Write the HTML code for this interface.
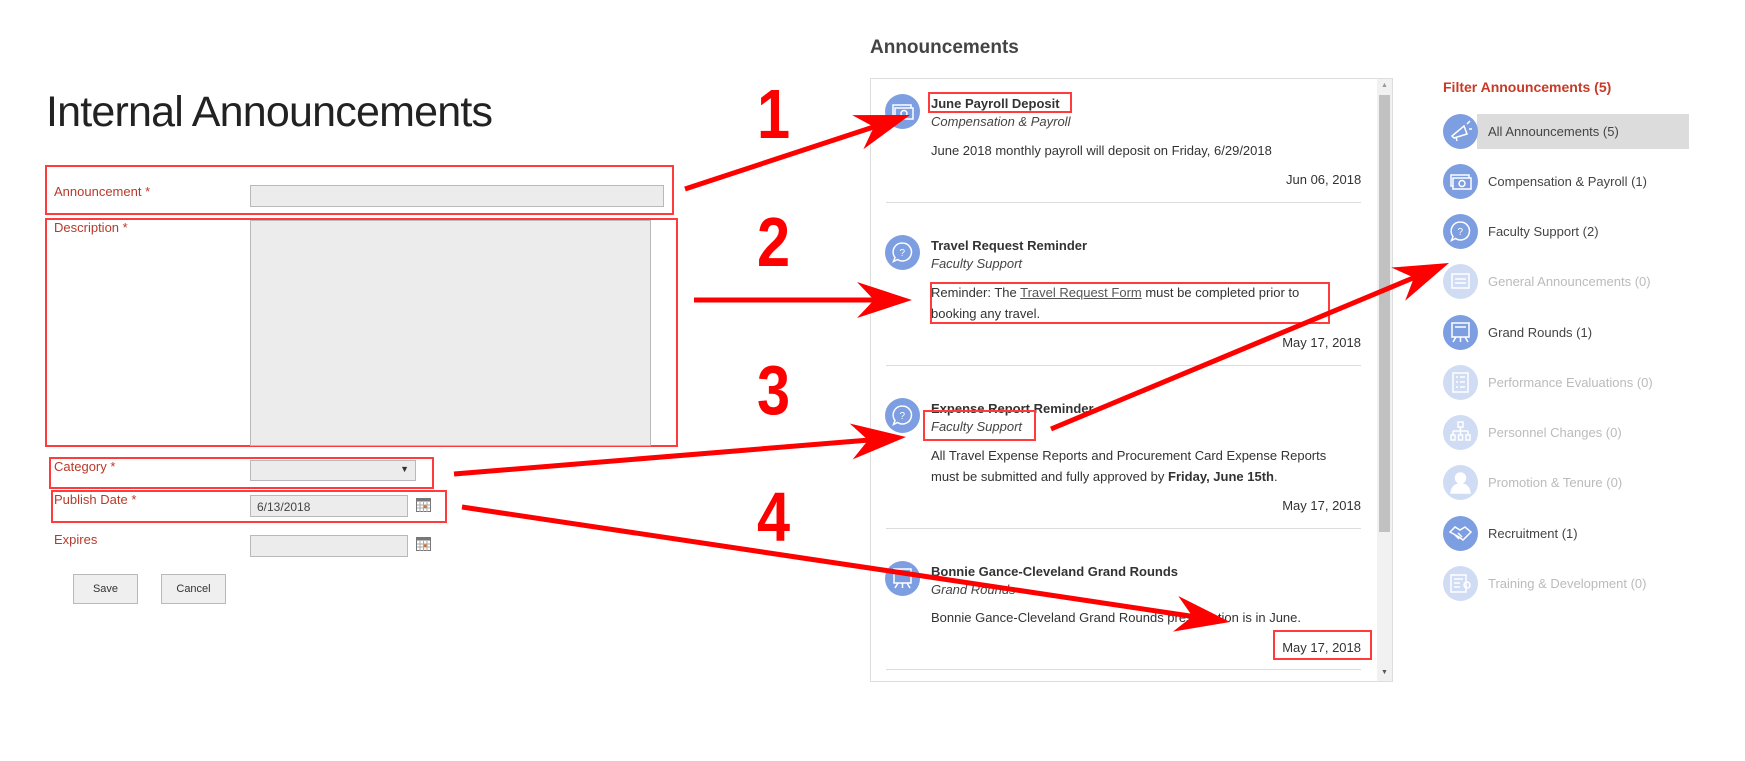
<!DOCTYPE html>
<html><head><meta charset="utf-8">
<style>
*{margin:0;padding:0;box-sizing:border-box}
body{width:1745px;height:761px;background:#fff;position:relative;overflow:hidden;font-family:"Liberation Sans",sans-serif;}
.a{position:absolute}
.lbl{position:absolute;color:#b83a2a;font-size:13px;}
.inp{position:absolute;background:#ececec;border:1px solid #b9b9b9;}
.rb{position:absolute;border:2px solid #ff3b3b;}
.btn{position:absolute;background:#efefef;border:1px solid #b9b9b9;font-size:11px;color:#333;text-align:center;line-height:29px;}
.num{position:absolute;font-weight:bold;color:#f00;font-size:70px;line-height:1;transform:scaleX(0.85);transform-origin:left top}
.ic{position:absolute;width:35px;height:35px;border-radius:50%;background:#7d9ee0;}
.ic.d{background:#cfdcf3}
.t{position:absolute;font-size:13px;color:#333;white-space:nowrap}
.tb{font-weight:bold;color:#333}
.ti{font-style:italic;color:#444}
.sep{position:absolute;left:886px;width:475px;height:1px;background:#ddd}
.f{position:absolute;left:1488px;font-size:13px;color:#444;white-space:nowrap}
.f.d{color:#bbb}
</style></head><body>

<div class="a" style="left:46px;top:88px;font-size:43px;color:#222;font-weight:300;letter-spacing:-0.8px;white-space:nowrap">Internal Announcements</div>

<div class="rb" style="left:45px;top:165px;width:629px;height:50px"></div>
<div class="lbl" style="left:54px;top:184px">Announcement *</div>
<div class="inp" style="left:250px;top:185px;width:414px;height:22px"></div>

<div class="rb" style="left:45px;top:218px;width:633px;height:229px"></div>
<div class="lbl" style="left:54px;top:220px">Description *</div>
<div class="inp" style="left:250px;top:220px;width:401px;height:226px"></div>

<div class="rb" style="left:49px;top:457px;width:385px;height:32px"></div>
<div class="lbl" style="left:54px;top:459px">Category *</div>
<div class="inp" style="left:250px;top:460px;width:166px;height:21px"><span style="position:absolute;right:6px;top:3px;font-size:9px;color:#333">▼</span></div>

<div class="rb" style="left:51px;top:490px;width:396px;height:33px"></div>
<div class="lbl" style="left:54px;top:492px">Publish Date *</div>
<div class="inp" style="left:250px;top:495px;width:158px;height:22px;font-size:12px;color:#444;padding:4px 6px">6/13/2018</div>
<svg class="a" style="left:416px;top:498px" width="15" height="14" viewBox="0 0 15 14"><rect x="0.5" y="0.5" width="14" height="13" fill="#fff" stroke="#777"/><rect x="0.5" y="0.5" width="14" height="3" fill="#777"/><path d="M4 4v10M7.5 4v10M11 4v10M1 7h13M1 10h13" stroke="#aaa"/><rect x="8" y="7.5" width="2.5" height="2.5" fill="#e07020"/></svg>

<div class="lbl" style="left:54px;top:532px">Expires</div>
<div class="inp" style="left:250px;top:535px;width:158px;height:22px"></div>
<svg class="a" style="left:416px;top:537px" width="15" height="14" viewBox="0 0 15 14"><rect x="0.5" y="0.5" width="14" height="13" fill="#fff" stroke="#777"/><rect x="0.5" y="0.5" width="14" height="3" fill="#777"/><path d="M4 4v10M7.5 4v10M11 4v10M1 7h13M1 10h13" stroke="#aaa"/><rect x="8" y="7.5" width="2.5" height="2.5" fill="#e07020"/></svg>

<div class="btn" style="left:73px;top:574px;width:65px;height:30px">Save</div>
<div class="btn" style="left:161px;top:574px;width:65px;height:30px">Cancel</div>

<div class="num" style="left:757px;top:79px">1</div>
<div class="num" style="left:757px;top:207px">2</div>
<div class="num" style="left:757px;top:355px">3</div>
<div class="num" style="left:757px;top:482px">4</div>

<div class="a" style="left:870px;top:37px;font-size:19px;font-weight:bold;color:#444">Announcements</div>
<div class="a" style="left:870px;top:78px;width:523px;height:604px;border:1px solid #ddd"></div>
<div class="a" style="left:1377px;top:79px;width:15px;height:602px;background:#f1f1f1"></div>
<div class="a" style="left:1379px;top:95px;width:11px;height:437px;background:#c1c1c1"></div>
<div class="a" style="left:1381px;top:82px;font-size:7px;color:#999">▲</div>
<div class="a" style="left:1381px;top:669px;font-size:7px;color:#555">▼</div>

<div class="ic" style="left:885px;top:94px"></div>
<div class="t tb" style="left:931px;top:96px">June Payroll Deposit</div>
<div class="t ti" style="left:931px;top:114px">Compensation &amp; Payroll</div>
<div class="t" style="left:931px;top:143px">June 2018 monthly payroll will deposit on Friday, 6/29/2018</div>
<div class="t" style="left:1286px;top:172px;width:75px;text-align:right">Jun 06, 2018</div>
<div class="sep" style="top:202px"></div>

<div class="ic" style="left:885px;top:235px"></div>
<div class="t tb" style="left:931px;top:238px">Travel Request Reminder</div>
<div class="t ti" style="left:931px;top:256px">Faculty Support</div>
<div class="t" style="left:931px;top:285px">Reminder: The <u style="color:#555">Travel Request Form</u> must be completed prior to</div>
<div class="t" style="left:931px;top:306px">booking any travel.</div>
<div class="t" style="left:1276px;top:335px;width:85px;text-align:right">May 17, 2018</div>
<div class="sep" style="top:365px"></div>

<div class="ic" style="left:885px;top:398px"></div>
<div class="t tb" style="left:931px;top:401px">Expense Report Reminder</div>
<div class="t ti" style="left:931px;top:419px">Faculty Support</div>
<div class="t" style="left:931px;top:448px">All Travel Expense Reports and Procurement Card Expense Reports</div>
<div class="t" style="left:931px;top:469px">must be submitted and fully approved by <b>Friday, June 15th</b>.</div>
<div class="t" style="left:1276px;top:498px;width:85px;text-align:right">May 17, 2018</div>
<div class="sep" style="top:528px"></div>

<div class="ic" style="left:885px;top:561px"></div>
<div class="t tb" style="left:931px;top:564px">Bonnie Gance-Cleveland Grand Rounds</div>
<div class="t ti" style="left:931px;top:582px">Grand Rounds</div>
<div class="t" style="left:931px;top:610px">Bonnie Gance-Cleveland Grand Rounds presentation is in June.</div>
<div class="t" style="left:1276px;top:640px;width:85px;text-align:right">May 17, 2018</div>
<div class="sep" style="top:669px"></div>

<div class="rb" style="left:928px;top:92px;width:144px;height:21px"></div>
<div class="rb" style="left:930px;top:282px;width:400px;height:42px"></div>
<div class="rb" style="left:923px;top:410px;width:113px;height:31px"></div>
<div class="rb" style="left:1273px;top:630px;width:99px;height:30px"></div>

<div class="a" style="left:1443px;top:79px;font-size:14px;font-weight:bold;color:#c83a26">Filter Announcements (5)</div>
<div class="a" style="left:1477px;top:114px;width:212px;height:35px;background:#dcdcdc"></div>
<div class="ic" style="left:1443px;top:114px"></div><div class="f" style="top:124px">All Announcements (5)</div>
<div class="ic" style="left:1443px;top:164px"></div><div class="f" style="top:174px">Compensation &amp; Payroll (1)</div>
<div class="ic" style="left:1443px;top:214px"></div><div class="f" style="top:224px">Faculty Support (2)</div>
<div class="ic d" style="left:1443px;top:264px"></div><div class="f d" style="top:274px">General Announcements (0)</div>
<div class="ic" style="left:1443px;top:315px"></div><div class="f" style="top:325px">Grand Rounds (1)</div>
<div class="ic d" style="left:1443px;top:365px"></div><div class="f d" style="top:375px">Performance Evaluations (0)</div>
<div class="ic d" style="left:1443px;top:415px"></div><div class="f d" style="top:425px">Personnel Changes (0)</div>
<div class="ic d" style="left:1443px;top:465px"></div><div class="f d" style="top:475px">Promotion &amp; Tenure (0)</div>
<div class="ic" style="left:1443px;top:516px"></div><div class="f" style="top:526px">Recruitment (1)</div>
<div class="ic d" style="left:1443px;top:566px"></div><div class="f d" style="top:576px">Training &amp; Development (0)</div>

<svg class="a" style="left:0;top:0" width="1745" height="761" fill="none" stroke="#fff" stroke-width="1.5">
<g transform="translate(885,94)"><rect x="8" y="11" width="18" height="11"/><rect x="10" y="14" width="18" height="11" fill="#7d9ee0"/><circle cx="19" cy="19.5" r="3"/></g>
<g transform="translate(1443,164)"><rect x="8" y="11" width="18" height="11"/><rect x="10" y="14" width="18" height="11" fill="#7d9ee0"/><circle cx="19" cy="19.5" r="3"/></g>
<g transform="translate(885,235)"><path d="M17.5 8a9 9 0 1 1-5 16.5l-4 2 1.5-4A9 9 0 0 1 17.5 8z"/><text x="14.5" y="21" font-size="10" fill="#fff" stroke="none" font-family="Liberation Sans">?</text></g>
<g transform="translate(885,398)"><path d="M17.5 8a9 9 0 1 1-5 16.5l-4 2 1.5-4A9 9 0 0 1 17.5 8z"/><text x="14.5" y="21" font-size="10" fill="#fff" stroke="none" font-family="Liberation Sans">?</text></g>
<g transform="translate(1443,214)"><path d="M17.5 8a9 9 0 1 1-5 16.5l-4 2 1.5-4A9 9 0 0 1 17.5 8z"/><text x="14.5" y="21" font-size="10" fill="#fff" stroke="none" font-family="Liberation Sans">?</text></g>
<g transform="translate(885,561)"><rect x="9" y="8" width="17" height="14"/><path d="M12 12h11M13 22l-3 5M22 22l3 5M17.5 22v5"/></g>
<g transform="translate(1443,315)"><rect x="9" y="8" width="17" height="14"/><path d="M12 12h11M13 22l-3 5M22 22l3 5M17.5 22v5"/></g>
<g transform="translate(1443,114)"><path d="M9 22l12-10 3 8-13 4zM13 23l1 4M24 10l3-3M26 15h3"/></g>
<g transform="translate(1443,264)"><rect x="9" y="10" width="17" height="14"/><path d="M12 15h11M12 19h11"/></g>
<g transform="translate(1443,365)"><rect x="10" y="8" width="15" height="19"/><path d="M13 12h2M17 12h5M13 17h2M17 17h5M13 22h2M17 22h5"/></g>
<g transform="translate(1443,415)"><rect x="15" y="7" width="5" height="5"/><path d="M17.5 12v4M10 16h15M10 16v4M17.5 16v4M25 16v4"/><rect x="8" y="20" width="4" height="5"/><rect x="15.5" y="20" width="4" height="5"/><rect x="23" y="20" width="4" height="5"/></g>
<g transform="translate(1443,465)"><circle cx="17.5" cy="13" r="5" fill="#fff"/><path d="M8 28c1-7 5-9 9.5-9s8.5 2 9.5 9z" fill="#fff"/></g>
<g transform="translate(1443,516)"><path d="M7 16l5-5 5 3 5-3 6 5-8 8-4-3zM12 19l4 4M15 17l4 4"/></g>
<g transform="translate(1443,566)"><rect x="8" y="9" width="15" height="17"/><path d="M11 13h9M11 17h6M11 21h6"/><circle cx="24" cy="19" r="3"/></g>
</svg>

<svg class="a" style="left:0;top:0" width="1745" height="761" id="arr"></svg>
<script>
(function(){
var s=document.getElementById('arr'),h='';
function A(x1,y1,x2,y2){
 var dx=x2-x1,dy=y2-y1,L=Math.hypot(dx,dy),ux=dx/L,uy=dy/L,px=-uy,py=ux;
 var bl=55,bw=18,nb=38;
 var bx=x2-ux*bl,by=y2-uy*bl,nx=x2-ux*nb,ny=y2-uy*nb;
 h+='<line x1="'+x1+'" y1="'+y1+'" x2="'+nx+'" y2="'+ny+'" stroke="#f00" stroke-width="5"/>';
 h+='<polygon fill="#f00" points="'+x2+','+y2+' '+(bx+px*bw)+','+(by+py*bw)+' '+nx+','+ny+' '+(bx-px*bw)+','+(by-py*bw)+'"/>';
}
A(685,189,910,115);
A(694,300,912,300);
A(454,474,906,437);
A(1051,429,1449,263);
A(462,507,1230,622);
s.innerHTML=h;
})();
</script>
</body></html>
